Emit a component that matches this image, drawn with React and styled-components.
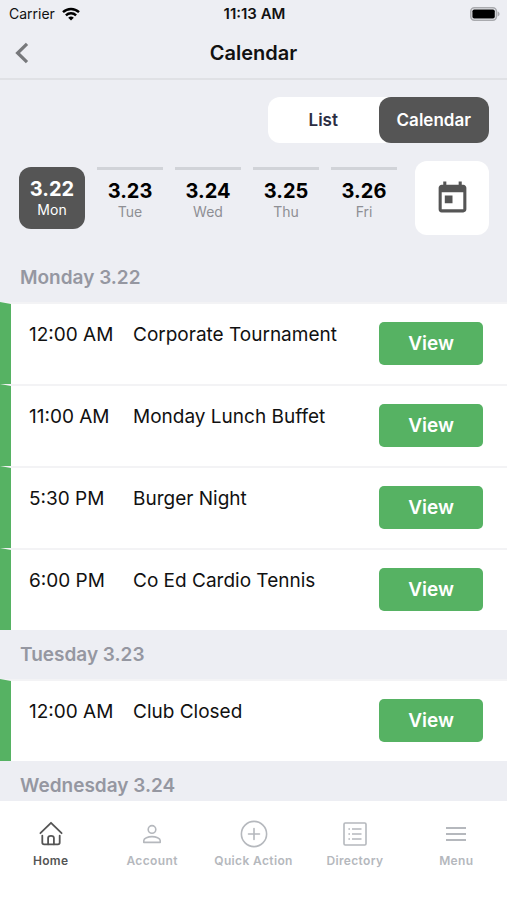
import { useState } from 'react'
import styled, { createGlobalStyle } from 'styled-components'
import { MdToday } from 'react-icons/md'

const GlobalStyle = createGlobalStyle`
  * {
    box-sizing: border-box;
  }

  body {
    margin: 0;
    font-family: Inter, "Liberation Sans", sans-serif;
    background: #edeef3;
    color: #111;
  }

  button {
    font-family: inherit;
    border: none;
    padding: 0;
    cursor: pointer;
  }
`

const Screen = styled.div`
  height: 100vh;
  display: flex;
  flex-direction: column;
`

const StatusBar = styled.div`
  display: grid;
  grid-template-columns: 1fr auto 1fr;
  align-items: center;
  height: 27px;
  padding: 0 7px 0 9px;
  font-size: 14px;
`

const Carrier = styled.div`
  display: flex;
  align-items: center;
  gap: 7px;
`

const Clock = styled.div`
  font-size: 15px;
  font-weight: 600;
`

const Battery = styled.svg`
  justify-self: end;
`

const Header = styled.header`
  display: grid;
  grid-template-columns: 1fr auto 1fr;
  align-items: center;
  height: 53px;
  padding: 0 15px;
  border-bottom: 2px solid #e0e1e5;
`

const BackButton = styled.button`
  display: flex;
  justify-self: start;
  background: none;
`

const Title = styled.h1`
  margin: 0;
  font-size: 20px;
  font-weight: 600;
  line-height: 24px;
`

const Controls = styled.div`
  display: flex;
  flex-direction: column;
  gap: 18px;
  padding: 17px 18px 18px 19px;
`

const Toggle = styled.div`
  display: flex;
  align-self: flex-end;
  width: 221px;
  border-radius: 12px;
  background: white;
`

const ToggleButton = styled.button`
  flex: 1;
  height: 46px;
  border-radius: 12px;
  background: ${({ $active }) => ($active ? '#555' : 'transparent')};
  color: ${({ $active }) => ($active ? 'white' : '#2b2d42')};
  font-size: 17px;
  font-weight: 600;
`

const DayRow = styled.div`
  display: flex;
  align-items: center;
  justify-content: space-between;
  gap: 18px;
`

const Days = styled.div`
  display: flex;
  flex: 1;
  gap: 12px;
`

const Day = styled.button`
  display: flex;
  flex: 1;
  flex-direction: column;
  align-items: center;
  height: 62px;
  padding-top: ${({ $active }) => ($active ? '10px' : '9px')};
  border-top: ${({ $active }) => ($active ? 'none' : '3px solid #d1d3d8')};
  border-radius: ${({ $active }) => ($active ? '12px' : '0')};
  background: ${({ $active }) => ($active ? '#555' : 'transparent')};
  color: ${({ $active }) => ($active ? 'white' : '#000')};
`

const DayDate = styled.span`
  font-size: 20px;
  font-weight: 700;
  line-height: 24px;
`

const DayName = styled.span`
  color: ${({ $active }) => ($active ? 'white' : '#8e8f94')};
  font-size: 14px;
  line-height: 18px;
`

const PickerButton = styled.button`
  display: flex;
  align-items: center;
  justify-content: center;
  width: 74px;
  height: 74px;
  border-radius: 12px;
  background: white;
  color: #555;
`

const Agenda = styled.main`
  flex: 1;
  min-height: 0;
  overflow-y: auto;
  scrollbar-width: none;
`

const SectionTitle = styled.h2`
  margin: 0;
  padding: 0 20px;
  color: #9597a1;
  font-size: 19px;
  font-weight: 600;
  line-height: 49px;
`

const EventRow = styled.div`
  display: flex;
  align-items: flex-start;
  height: 82px;
  padding: 18px 24px 0 18px;
  border-top: 2px solid #f3f3f5;
  border-left: 11px solid #56b263;
  background: white;
  font-size: 19px;
  line-height: 26px;
`

const EventTime = styled.div`
  width: 104px;
`

const EventName = styled.div`
  flex: 1;
`

const ViewButton = styled.button`
  width: 104px;
  height: 43px;
  border-radius: 5px;
  background: #56b263;
  color: white;
  font-size: 19px;
  font-weight: 600;
`

const TabBar = styled.nav`
  display: flex;
  height: 99px;
  padding-top: 18px;
  background: white;
`

const Tab = styled.a`
  display: flex;
  flex: 1;
  flex-direction: column;
  align-items: center;
  gap: 4px;
  color: ${({ $active }) => ($active ? '#555' : '#b5b8bd')};
  font-size: 12px;
  font-weight: 600;
  letter-spacing: 0.03em;
  line-height: 16px;
  text-decoration: none;
  white-space: nowrap;
`

const TabIcon = styled.span`
  display: flex;
  align-items: center;
  justify-content: center;
  height: 30px;
`

const WifiIcon = () => (
  <svg width="18" height="14" viewBox="0 0 18 14" fill="none" stroke="#000" strokeWidth="2.4">
    <path d="M1 5.2a11.5 11.5 0 0 1 16 0" />
    <path d="M3.9 8.3a7.3 7.3 0 0 1 10.2 0" />
    <path d="M9 13.6 6.2 10.8a4 4 0 0 1 5.6 0z" fill="#000" stroke="none" />
  </svg>
)

const BatteryIcon = () => (
  <Battery width="30" height="14" viewBox="0 0 30 14" aria-label="Battery full">
    <rect x="0.8" y="0.8" width="25.6" height="12.4" rx="3.6" fill="#edeef3" stroke="#a9aaae" strokeWidth="1.6" />
    <rect x="2.4" y="2.4" width="22.4" height="9.2" rx="1.8" fill="#000" />
    <path d="M27.6 4.6c2.6.6 2.6 4.2 0 4.8z" fill="#a9aaae" />
  </Battery>
)

const BackIcon = () => (
  <svg width="14" height="22" viewBox="0 0 14 22" fill="none" stroke="#77787b" strokeWidth="3.2">
    <path d="M12 1.8 2.6 11l9.4 9.2" />
  </svg>
)

const HomeIcon = () => (
  <svg width="26" height="26" viewBox="0 0 26 26" fill="none" stroke="currentColor" strokeWidth="1.8" strokeLinecap="round" strokeLinejoin="round">
    <path d="M2.4 12.2 13 1.8l10.6 10.4" />
    <path d="M4.3 14.6v6.9q0 1.8 1.8 1.8h4v-6.2q0-2.2 2.9-2.2t2.9 2.2v6.2h4q1.8 0 1.8-1.8v-6.9" />
    <path d="M10.1 23.3h5.8" />
  </svg>
)

const AccountIcon = () => (
  <svg width="20" height="20" viewBox="0 0 20 20" fill="none" stroke="currentColor" strokeWidth="1.6">
    <circle cx="10" cy="5.4" r="3.8" />
    <path d="M1.8 18.4v-2c0-2.2 4.2-3.8 8.2-3.8s8.2 1.6 8.2 3.8v2z" strokeLinejoin="round" />
  </svg>
)

const PlusIcon = () => (
  <svg width="28" height="28" viewBox="0 0 28 28" fill="none" stroke="currentColor" strokeWidth="1.6" strokeLinecap="round">
    <circle cx="14" cy="14" r="12.6" />
    <path d="M14 8.5v11M8.5 14h11" />
  </svg>
)

const DirectoryIcon = () => (
  <svg width="24" height="24" viewBox="0 0 24 24" fill="none" stroke="currentColor" strokeWidth="1.6">
    <rect x="1" y="1" width="22" height="22" rx="1.2" />
    <path d="M9 7h9.5M9 12h9.5M9 17h9.5M5.4 7H7M5.4 12H7M5.4 17H7" />
  </svg>
)

const MenuIcon = () => (
  <svg width="22" height="16" viewBox="0 0 22 16" fill="none" stroke="currentColor" strokeWidth="1.8">
    <path d="M1 2h20M1 8h20M1 14h20" />
  </svg>
)

const days = [
  { date: '3.22', name: 'Mon' },
  { date: '3.23', name: 'Tue' },
  { date: '3.24', name: 'Wed' },
  { date: '3.25', name: 'Thu' },
  { date: '3.26', name: 'Fri' },
]

const sections = [
  {
    title: 'Monday 3.22',
    events: [
      { time: '12:00 AM', name: 'Corporate Tournament' },
      { time: '11:00 AM', name: 'Monday Lunch Buffet' },
      { time: '5:30 PM', name: 'Burger Night' },
      { time: '6:00 PM', name: 'Co Ed Cardio Tennis' },
    ],
  },
  {
    title: 'Tuesday 3.23',
    events: [{ time: '12:00 AM', name: 'Club Closed' }],
  },
  { title: 'Wednesday 3.24', events: [] },
]

const tabs = [
  { label: 'Home', icon: <HomeIcon /> },
  { label: 'Account', icon: <AccountIcon /> },
  { label: 'Quick Action', icon: <PlusIcon /> },
  { label: 'Directory', icon: <DirectoryIcon /> },
  { label: 'Menu', icon: <MenuIcon /> },
]

const App = () => {
  const [view, setView] = useState('Calendar')
  const [selectedDay, setSelectedDay] = useState('3.22')

  return (
    <Screen>
      <GlobalStyle />
      <StatusBar>
        <Carrier>
          Carrier
          <WifiIcon />
        </Carrier>
        <Clock>11:13 AM</Clock>
        <BatteryIcon />
      </StatusBar>

      <Header>
        <BackButton aria-label="Back">
          <BackIcon />
        </BackButton>
        <Title>Calendar</Title>
      </Header>

      <Controls>
        <Toggle>
          {['List', 'Calendar'].map((name) => (
            <ToggleButton key={name} $active={view === name} onClick={() => setView(name)}>
              {name}
            </ToggleButton>
          ))}
        </Toggle>
        <DayRow>
          <Days>
            {days.map((day) => (
              <Day
                key={day.date}
                $active={selectedDay === day.date}
                onClick={() => setSelectedDay(day.date)}
              >
                <DayDate>{day.date}</DayDate>
                <DayName $active={selectedDay === day.date}>{day.name}</DayName>
              </Day>
            ))}
          </Days>
          <PickerButton aria-label="Pick a date">
            <MdToday size={37} />
          </PickerButton>
        </DayRow>
      </Controls>

      <Agenda>
        {sections.map((section) => (
          <section key={section.title}>
            <SectionTitle>{section.title}</SectionTitle>
            {section.events.map((event) => (
              <EventRow key={event.name}>
                <EventTime>{event.time}</EventTime>
                <EventName>{event.name}</EventName>
                <ViewButton>View</ViewButton>
              </EventRow>
            ))}
          </section>
        ))}
      </Agenda>

      <TabBar>
        {tabs.map((tab) => (
          <Tab key={tab.label} href="#" $active={tab.label === 'Home'}>
            <TabIcon>{tab.icon}</TabIcon>
            {tab.label}
          </Tab>
        ))}
      </TabBar>
    </Screen>
  )
}

export default App
